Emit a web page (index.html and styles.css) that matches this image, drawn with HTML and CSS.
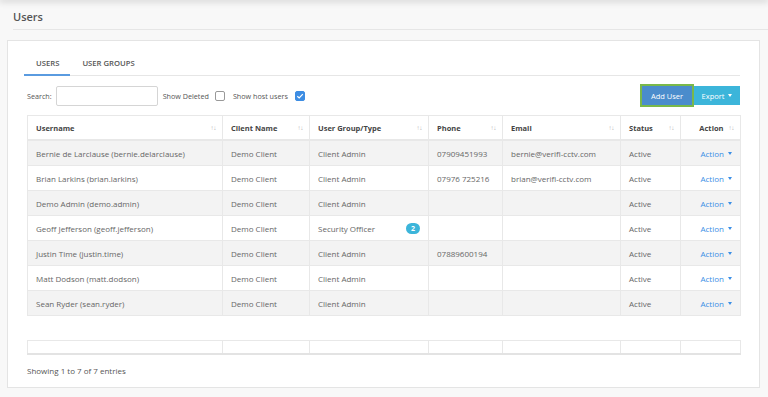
FILE: index.html
```html
<!DOCTYPE html>
<html lang="en">
<head>
    <meta charset="UTF-8">
    <title>Users</title>
    <link rel="stylesheet" href="styles.css">
</head>
<body>
    <div class="top-shadow"></div>

    <!-- Page title -->
    <div class="page-header">
        <h1>Users</h1>
    </div>

    <div class="card">
        <!-- Tabs -->
        <div class="tabs">
            <a href="#" class="tab active">Users</a>
            <a href="#" class="tab">User Groups</a>
        </div>

        <!-- Filter / toolbar -->
        <div class="toolbar">
            <label class="search">Search: <input type="text"></label>
            <span class="opt">Show Deleted</span>
            <span class="check"></span>
            <span class="opt">Show host users</span>
            <span class="check checked">
                <svg viewBox="0 0 10 10" width="10" height="10"><path d="M2.3 5.2 L4.2 7 L7.8 3.2" fill="none" stroke="#fff" stroke-width="1.2"/></svg>
            </span>
            <div class="buttons">
                <button class="btn btn-add">Add User</button>
                <button class="btn btn-export">Export <span class="caret"></span></button>
            </div>
        </div>

        <!-- Users table -->
        <table class="grid">
            <colgroup>
                <col style="width:195px"><col style="width:87px"><col style="width:119px">
                <col style="width:74px"><col style="width:118px"><col style="width:60px"><col style="width:60px">
            </colgroup>
            <thead>
                <tr>
                    <th><div class="th">Username <span class="sort">↑↓</span></div></th>
                    <th><div class="th">Client Name <span class="sort">↑↓</span></div></th>
                    <th><div class="th">User Group/Type <span class="sort">↑↓</span></div></th>
                    <th><div class="th">Phone <span class="sort">↑↓</span></div></th>
                    <th><div class="th">Email <span class="sort">↑↓</span></div></th>
                    <th><div class="th">Status <span class="sort">↑↓</span></div></th>
                    <th><div class="th th-right">Action <span class="sort">↑↓</span></div></th>
                </tr>
            </thead>
            <tbody>
                <tr>
                    <td>Bernie de Larclause (bernie.delarclause)</td><td>Demo Client</td><td>Client Admin</td>
                    <td>07909451993</td><td>bernie@verifi-cctv.com</td><td>Active</td>
                    <td class="act"><a href="#">Action <span class="caret"></span></a></td>
                </tr>
                <tr>
                    <td>Brian Larkins (brian.larkins)</td><td>Demo Client</td><td>Client Admin</td>
                    <td>07976 725216</td><td>brian@verifi-cctv.com</td><td>Active</td>
                    <td class="act"><a href="#">Action <span class="caret"></span></a></td>
                </tr>
                <tr>
                    <td>Demo Admin (demo.admin)</td><td>Demo Client</td><td>Client Admin</td>
                    <td></td><td></td><td>Active</td>
                    <td class="act"><a href="#">Action <span class="caret"></span></a></td>
                </tr>
                <tr>
                    <td>Geoff Jefferson (geoff.jefferson)</td><td>Demo Client</td>
                    <td><div class="group">Security Officer <span class="badge">2</span></div></td>
                    <td></td><td></td><td>Active</td>
                    <td class="act"><a href="#">Action <span class="caret"></span></a></td>
                </tr>
                <tr>
                    <td>Justin Time (justin.time)</td><td>Demo Client</td><td>Client Admin</td>
                    <td>07889600194</td><td></td><td>Active</td>
                    <td class="act"><a href="#">Action <span class="caret"></span></a></td>
                </tr>
                <tr>
                    <td>Matt Dodson (matt.dodson)</td><td>Demo Client</td><td>Client Admin</td>
                    <td></td><td></td><td>Active</td>
                    <td class="act"><a href="#">Action <span class="caret"></span></a></td>
                </tr>
                <tr>
                    <td>Sean Ryder (sean.ryder)</td><td>Demo Client</td><td>Client Admin</td>
                    <td></td><td></td><td>Active</td>
                    <td class="act"><a href="#">Action <span class="caret"></span></a></td>
                </tr>
            </tbody>
        </table>

        <!-- Scroll footer -->
        <table class="grid foot">
            <colgroup>
                <col style="width:195px"><col style="width:87px"><col style="width:119px">
                <col style="width:74px"><col style="width:118px"><col style="width:60px"><col style="width:60px">
            </colgroup>
            <tfoot>
                <tr><td></td><td></td><td></td><td></td><td></td><td></td><td></td></tr>
            </tfoot>
        </table>

        <div class="info">Showing 1 to 7 of 7 entries</div>
    </div>
</body>
</html>
```

FILE: styles.css
```css
body {
    margin: 0;
    font-family: "Open Sans", "Noto Sans", sans-serif;
    font-size: 8px;
    color: #666;
    background: #f8f8f8;
    overflow: hidden;
}
.top-shadow {
    height: 1px;
    margin-top: -1px;
    box-shadow: 0 0 7px 1px rgba(0, 0, 0, 0.25);
}
.page-header {
    margin-left: 13px;
    height: 29px;
    border-bottom: 1px solid #e6e6e6;
}
.page-header h1 {
    margin: 0;
    padding-top: 9px;
    font-size: 11px;
    font-weight: 600;
    color: #555;
    line-height: 15px;
}
.card {
    margin: 10px 8px 0 7px;
    height: 348px;
    box-sizing: border-box;
    background: #fff;
    border: 1px solid #e4e4e4;
    padding: 11px 19px 0 19px;
}

/* Tabs */
.tabs {
    display: flex;
    border-bottom: 1px solid #e6e6e6;
    margin-left: -3px;
}
.tab {
    display: block;
    padding: 5px 11px 5px 12px;
    line-height: 12px;
    font-size: 7.7px;
    font-weight: 600;
    text-transform: uppercase;
    text-decoration: none;
    color: #555;
    border-bottom: 2px solid transparent;
    margin-bottom: -1px;
}
.tab.active {
    border-bottom-color: #5a9be0;
}

/* Toolbar */
.toolbar {
    display: flex;
    align-items: center;
    margin-top: 8px;
    height: 23px;
    font-size: 7.2px;
}
.search {
    display: flex;
    align-items: center;
    color: #555;
}
.search input {
    margin-left: 4px;
    width: 102px;
    height: 20px;
    box-sizing: border-box;
    border: 1px solid #d5d5d5;
    border-radius: 2px;
}
.search + .opt {
    margin-left: 5px;
}
.opt {
    color: #555;
}
.check {
    display: inline-flex;
    width: 10px;
    height: 10px;
    box-sizing: border-box;
    border: 1px solid #999;
    border-radius: 2px;
    margin: 0 8px 0 6px;
}
.check.checked {
    background: #3d8de3;
    border-color: #3d8de3;
    margin-left: 7px;
}
.check svg {
    margin: -1px;
}
.buttons {
    margin-left: auto;
    display: flex;
    align-items: center;
}
.btn {
    font-family: inherit;
    font-size: 7.5px;
    color: #fff;
    border: none;
    padding: 0;
    cursor: pointer;
}
.btn-add {
    width: 54px;
    height: 23px;
    background: #4a8ccc;
    border: 2px solid #79b84a;
}
.btn-export {
    width: 46px;
    height: 19px;
    background: #3cb5da;
}
.caret {
    display: inline-block;
    width: 0;
    height: 0;
    border-left: 2.5px solid transparent;
    border-right: 2.5px solid transparent;
    border-top: 3px solid currentColor;
    vertical-align: 2px;
    margin-left: 2px;
}

/* Table */
.grid {
    width: 713px;
    table-layout: fixed;
    border-collapse: collapse;
    margin-top: 8px;
}
.grid th,
.grid td {
    height: 24px;
    padding: 0 8px;
    border: 1px solid #e8e8e8;
    text-align: left;
    white-space: nowrap;
    overflow: hidden;
}
.grid th {
    height: 23px;
    font-size: 7.5px;
    font-weight: 700;
    color: #444;
    border-bottom: 2px solid #e8e8e8;
}
.th {
    display: flex;
    justify-content: space-between;
    align-items: center;
}
.th-right {
    justify-content: flex-end;
    gap: 5px;
}
.sort {
    font-size: 6.5px;
    color: #b8b8b8;
    font-weight: 400;
    letter-spacing: -0.5px;
    margin-right: -2px;
}
.grid tbody tr:nth-child(odd) {
    background: #f3f3f3;
}
.act {
    text-align: right !important;
}
.act a {
    color: #3a8ee6;
    text-decoration: none;
}
.group {
    display: flex;
    align-items: center;
    justify-content: space-between;
}
.badge {
    display: inline-block;
    width: 14px;
    height: 11px;
    border-radius: 6px;
    background: #3cb5da;
    color: #fff;
    font-weight: 700;
    font-size: 7px;
    line-height: 11px;
    text-align: center;
}
.grid.foot {
    margin-top: 24px;
}
.grid.foot td {
    height: 12px;
    border-bottom: 2px solid #e3e3e3;
}
.info {
    margin-top: 10px;
    color: #555;
}
```
